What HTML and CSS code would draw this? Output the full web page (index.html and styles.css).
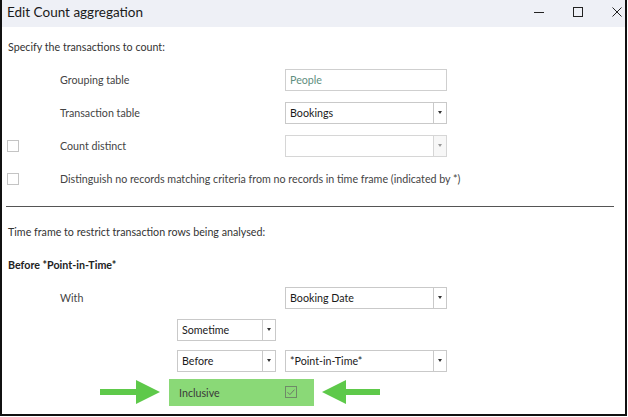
FILE: index.html
```html
<!DOCTYPE html>
<html lang="en">
<head>
    <meta charset="UTF-8">
    <title>Edit Count aggregation</title>
    <link rel="stylesheet" href="styles.css">
</head>
<body>

    <div class="window">
        <div class="titlebar">
            <span class="title">Edit Count aggregation</span>
            <div class="controls">
                <svg class="ctl" width="12" height="12" viewBox="0 0 12 12"><path d="M1 6.5h10" stroke="#222" stroke-width="1"/></svg>
                <svg class="ctl" width="12" height="12" viewBox="0 0 12 12"><rect x="1.5" y="1.5" width="9" height="9" fill="none" stroke="#222" stroke-width="1"/></svg>
                <svg class="ctl" width="12" height="12" viewBox="0 0 12 12"><path d="M1.5 1.5l9 9M10.5 1.5l-9 9" stroke="#222" stroke-width="1"/></svg>
            </div>
        </div>

        <div class="content">
            <div class="row">
                <span class="heading">Specify the transactions to count:</span>
            </div>

            <div class="row">
                <span class="check-col"></span>
                <span class="label">Grouping table</span>
                <div class="textbox readonly">People</div>
            </div>

            <div class="row">
                <span class="check-col"></span>
                <span class="label">Transaction table</span>
                <div class="combo wide">
                    <span class="value">Bookings</span>
                    <span class="drop"><i class="caret"></i></span>
                </div>
            </div>

            <div class="row">
                <span class="check-col"><span class="checkbox"></span></span>
                <span class="label">Count distinct</span>
                <div class="combo wide disabled">
                    <span class="value"></span>
                    <span class="drop"><i class="caret"></i></span>
                </div>
            </div>

            <div class="row">
                <span class="check-col"><span class="checkbox"></span></span>
                <span class="label long">Distinguish no records matching criteria from no records in time frame (indicated by *)</span>
            </div>

            <hr class="divider">

            <div class="row">
                <span class="heading">Time frame to restrict transaction rows being analysed:</span>
            </div>

            <div class="row">
                <span class="heading bold">Before *Point-in-Time*</span>
            </div>

            <div class="row">
                <span class="check-col"></span>
                <span class="label">With</span>
                <div class="combo wide">
                    <span class="value">Booking Date</span>
                    <span class="drop"><i class="caret"></i></span>
                </div>
            </div>

            <div class="row tight">
                <span class="check-col"></span>
                <span class="indent"></span>
                <div class="combo narrow">
                    <span class="value">Sometime</span>
                    <span class="drop"><i class="caret"></i></span>
                </div>
            </div>

            <div class="row tight">
                <span class="check-col"></span>
                <span class="indent"></span>
                <div class="combo narrow">
                    <span class="value">Before</span>
                    <span class="drop"><i class="caret"></i></span>
                </div>
                <div class="combo wide">
                    <span class="value">*Point-in-Time*</span>
                    <span class="drop"><i class="caret"></i></span>
                </div>
            </div>

            <div class="row callout">
                <svg class="arrow" width="62" height="24" viewBox="0 0 62 24"><path d="M0 9h36V0l24 12-24 12v-9H0z" fill="#5ec94a"/></svg>
                <div class="highlight">
                    <span>Inclusive</span>
                    <span class="checkbox checked">
                        <svg width="10" height="10" viewBox="0 0 10 10"><path d="M1.5 5.2l2.4 2.4 4.6-5" fill="none" stroke="#6b7a66" stroke-width="1"/></svg>
                    </span>
                </div>
                <svg class="arrow" width="58" height="24" viewBox="0 0 58 24"><path d="M58 9H24V0L0 12l24 12v-9h34z" fill="#5ec94a"/></svg>
            </div>
        </div>
    </div>

</body>
</html>
```

FILE: styles.css
```css
body {
    margin: 0;
    background-color: #fff;
    font-family: Lato, "Open Sans", sans-serif;
    font-size: 10.7px;
    color: #333;
}
.window {
    width: 627px;
    height: 416px;
    box-sizing: border-box;
    border-left: 2px solid #111;
    border-right: 2px solid #111;
    border-bottom: 2px solid #111;
    background-color: #fff;
}
.titlebar {
    height: 27px;
    box-sizing: border-box;
    padding: 0 0 3px 5px;
    background-color: #eef0f6;
    display: flex;
    align-items: center;
    justify-content: space-between;
}
.title {
    font-size: 13.5px;
    color: #1a1a1a;
}
.controls {
    display: flex;
    align-items: center;
    gap: 27px;
    padding-right: 2px;
}
.ctl {
    display: block;
}
.content {
    padding: 3px 0 0 5px;
}
.row {
    display: flex;
    align-items: center;
    height: 33px;
}
.row.tight {
    height: 31px;
}
.heading {
    padding-left: 1px;
    color: #333;
}
.bold {
    font-weight: bold;
    color: #222;
}
.check-col {
    width: 53px;
    display: flex;
    align-items: center;
}
.label {
    width: 225px;
    color: #444;
}
.label.long {
    width: auto;
}
.indent {
    width: 117px;
}
.checkbox {
    width: 12px;
    height: 12px;
    box-sizing: border-box;
    border: 1px solid #c4c4c4;
    background-color: #fff;
    display: flex;
    align-items: center;
    justify-content: center;
}
.textbox {
    width: 162px;
    height: 22px;
    box-sizing: border-box;
    border: 1px solid #cfcfcf;
    padding-left: 4px;
    display: flex;
    align-items: center;
}
.readonly {
    color: #5f8f80;
}
.combo {
    height: 22px;
    box-sizing: border-box;
    border: 1px solid #c9c9c9;
    background-color: #fff;
    display: flex;
    align-items: stretch;
    color: #1a1a1a;
}
.combo.wide {
    width: 162px;
}
.combo.narrow {
    width: 99px;
    margin-right: 9px;
}
.combo .value {
    flex: 1;
    padding-left: 4px;
    display: flex;
    align-items: center;
}
.combo .drop {
    width: 12px;
    border-left: 1px solid #c9c9c9;
    display: flex;
    align-items: center;
    justify-content: center;
}
.caret {
    width: 0;
    height: 0;
    border-left: 2.5px solid transparent;
    border-right: 2.5px solid transparent;
    border-top: 3px solid #333;
}
.combo.disabled .caret {
    border-top-color: #999;
}
.combo.disabled {
    border-color: #d6d6d6;
}
.combo.disabled .drop {
    border-left-color: #d6d6d6;
    background-color: #f7f7f7;
}
.divider {
    margin: 11px 11px 8px -1px;
    border: none;
    border-top: 1px solid #555;
}
.callout {
    height: 32px;
    padding-left: 93px;
}
.arrow {
    display: block;
}
.highlight {
    width: 145px;
    height: 27px;
    box-sizing: border-box;
    margin: 0 8px 0 7px;
    padding: 0 17px 0 10px;
    background-color: #8ad977;
    display: flex;
    align-items: center;
    justify-content: space-between;
    color: #3a3a3a;
}
.checkbox.checked {
    background-color: transparent;
    border-color: #6f8a68;
}
```
